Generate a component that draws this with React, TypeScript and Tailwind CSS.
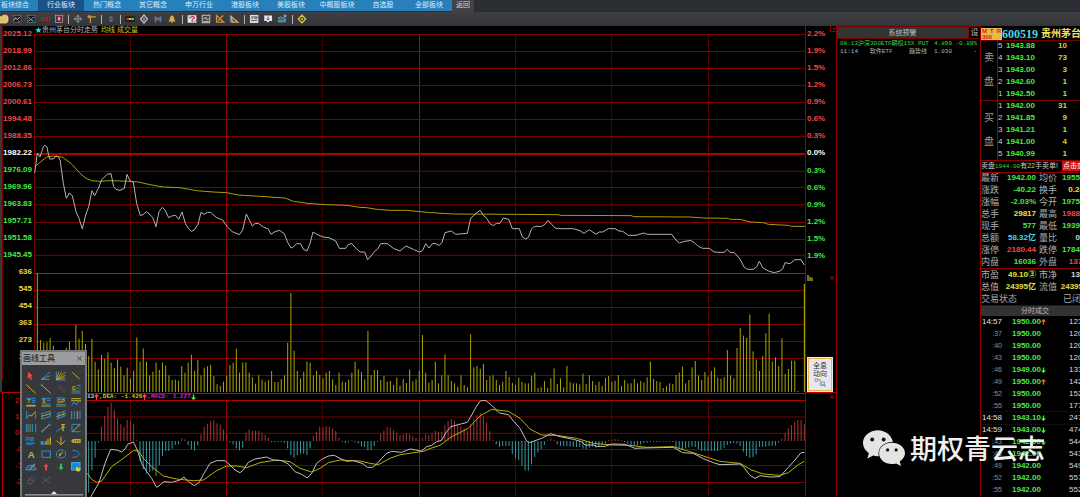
import React from "react";
import { X } from "lucide-react";

const tabs = ["板块综合", "行业板块", "热门概念", "其它概念", "申万行业", "港股板块", "美股板块", "中概股板块", "自选股", "全部板块"];

const Y = "#c4aa28";
const B = "#2f8ccc";

/* ---------- top toolbar ---------- */

const toolGroups: { name: string; icon: React.ReactNode }[][] = [
  [
    { name: "打开", icon: <path d="M2 9h12l4-5h12l4 6v14l-6 5H2z" fill="#e2c069" stroke="#fff0b8" strokeWidth="2" /> },
    { name: "分时图", icon: <><rect x="6" y="5" width="25" height="22" fill="#1c1d20" stroke="#777" strokeWidth="2" /><path d="M8 20l6-7 5 5 9-9" stroke="#c9c9c9" strokeWidth="3" fill="none" /><path d="M10 11h6M20 23h7" stroke="#d44" strokeWidth="3" /></> },
    { name: "K线图", icon: <><rect x="6" y="5" width="25" height="22" fill="#15181c" stroke="#777" strokeWidth="2" /><path d="M9 10l9 8 9-9M9 23l8-5 9 5" stroke="#7fb6d8" strokeWidth="3" fill="none" /></> },
    { name: "RSI", icon: <text x="3" y="22" fontSize="18" fontWeight="700" fill="#d01818" fontFamily="Liberation Sans">RSI</text> },
    { name: "信息", icon: <><rect x="7" y="4" width="23" height="23" fill="#2b3b63" stroke="#b9b9b9" strokeWidth="2" /><rect x="12" y="8" width="13" height="14" fill="#c32222" /><path d="M18 10v10" stroke="#fff" strokeWidth="4" /></> },
  ],
  [
    { name: "移动", icon: <path d="M18 4v23M6 15.500h24M14 9l4-5 4 5M14 22l4 5 4-5M11 11l-5 5 5 5M25 11l5 5-5 5" stroke="#9d9fa2" strokeWidth="3" fill="none" /> },
    { name: "画线", icon: <path d="M6 9h24M13 4v24M9 5l-4 4 4 4" stroke="#c59a4a" strokeWidth="4" fill="none" /> },
  ],
  [{ name: "上下", icon: <path d="M18 6l6 7H12zM18 26l6-7H12zM18 9v14" stroke="#646669" fill="#646669" strokeWidth="3" /> }],
  [
    { name: "红绿灯", icon: <><rect x="4" y="8" width="29" height="16" fill="#0c0c0c" /><rect x="7" y="12" width="8" height="8" fill="#e33" /><rect x="15" y="13" width="7" height="6" fill="#dd3" /><rect x="22" y="12" width="9" height="8" fill="#3d3" /></> },
    { name: "叠加", icon: <path d="M18 3l11 13-11 13L7 16zM18 11v10" stroke="#c2c4c6" strokeWidth="4" fill="none" /> },
    { name: "查找", icon: <path d="M10 7v19M26 7v19M6 16h24M15 11v9M21 11v9" stroke="#66718a" strokeWidth="5" /> },
    { name: "预警", icon: <path d="M18 4c-7 3-7 10-8 15l-4 5h24l-4-5c-1-5-1-12-8-15zM15 25h6v3h-6z" fill="#dfaa43" /> },
  ],
  [
    { name: "帮助", icon: <><rect x="4" y="4" width="28" height="24" fill="#e8e8ec" /><path d="M6 8l8 8M24 24l6-4" stroke="#336" strokeWidth="2" /><text x="10" y="27" fontSize="31" fontWeight="700" fill="#e01010" fontFamily="Liberation Sans">?</text></> },
    { name: "指标", icon: <><rect x="6" y="4" width="24" height="24" fill="#444" stroke="#c8c8c8" strokeWidth="3" /><path d="M9 15h6l3-5 4 9 5-4M10 24h17" stroke="#d8d8d8" strokeWidth="2.500" fill="none" /></> },
    { name: "三角一", icon: <path d="M7 5v21h23zM28 5L12 21" stroke="#d8913c" strokeWidth="4" fill="none" /> },
    { name: "三角二", icon: <><path d="M6 5v21h10z" stroke="#58a0c8" strokeWidth="3" fill="none" /><path d="M9 8l21 18H12z" stroke="#e8a85c" strokeWidth="4" fill="none" /></> },
  ],
  [
    { name: "报表", icon: <><rect x="5" y="3" width="27" height="26" fill="#dcdcdc" /><path d="M9 9h9M9 14h6M20 9h8v5h-8zM9 21h19" stroke="#555" strokeWidth="3" fill="none" /></> },
    { name: "下载", icon: <><path d="M6 5h25v17H22l-4 6-4-6H6z" fill="#e6e6ee" /><path d="M18 8v11M14 15l4 4 4-4" stroke="#424b8c" strokeWidth="3" fill="none" /></> },
    { name: "走势", icon: <><path d="M5 27V19l7-3 7 3 6-6 6 1v13z" fill="#4c89a8" /><path d="M5 15l8-5 6 4 10-9M23 4h7v7" stroke="#9cc5d8" strokeWidth="3" /></> },
  ],
  [{ name: "设置", icon: <path d="M18 4l12 12-12 12L6 16zM18 12v8M14 16h8" fill="#24240c" stroke="#d6cc4a" strokeWidth="4" /> }],
];

/* ---------- drawing palette ---------- */

const glyph = (t: string, x = 9) => (
  <text x={x} y="17" fontSize="16" fontWeight="700" fill={Y} fontFamily="Liberation Sans">{t}</text>
);

const drawTools: { name: string; icon: React.ReactNode }[] = [
  { name: "选择", icon: <path d="M9 2l15 14-7 1 5 8-5 2-4-8-5 4z" fill="#ef5350" stroke="#b71c1c" /> },
  { name: "扇形线", icon: <><path d="M4 25L30 3M4 25l27-11" stroke={B} strokeWidth="3" /><path d="M4 25h24" stroke={Y} strokeWidth="2" /></> },
  { name: "江恩角度", icon: <><path d="M4 2v25h28" stroke={B} strokeWidth="3" fill="none" /><path d="M5 26L11 2M5 26L21 2M5 26L31 4M5 26l26-13M5 26l26-6" stroke={Y} strokeWidth="2.500" /></> },
  { name: "线段", icon: <path d="M7 4l22 20" stroke={Y} strokeWidth="3" /> },
  { name: "直线", icon: <path d="M4 2l28 26" stroke={Y} strokeWidth="3" /> },
  { name: "射线", icon: <path d="M4 2l28 26M4 2l4 4" stroke={Y} strokeWidth="3" /> },
  { name: "平行线", icon: <path d="M4 4l24 22M12 3l20 18" stroke="#55564f" strokeWidth="2.500" /> },
  { name: "黄金线", icon: <><path d="M20 4h12M20 12h12M4 27h28" stroke={B} strokeWidth="3" /><path d="M4 21h28" stroke={Y} strokeWidth="2" />{glyph("G", 5)}</> },
  { name: "百分比线", icon: <><path d="M4 4h28M20 10h12M20 16h12" stroke={B} strokeWidth="3" /><path d="M4 26h28" stroke={Y} strokeWidth="5" />{glyph("T", 7)}</> },
  { name: "波段线", icon: <><path d="M4 4h28M20 10h12M4 21h28" stroke={B} strokeWidth="3" /><path d="M4 27h28" stroke={Y} strokeWidth="3" />{glyph("$", 7)}</> },
  { name: "目标线", icon: <><path d="M4 3h28M4 22h28" stroke={B} strokeWidth="3" /><path d="M4 27h28" stroke={Y} strokeWidth="2" />{glyph("GP", 6)}</> },
  { name: "线性回归", icon: <><path d="M3 5h30M3 11h30" stroke={Y} strokeWidth="3" /><path d="M5 26l7-11 7 9 8-13 5 4" stroke={B} strokeWidth="3" fill="none" /></> },
  { name: "回归带", icon: <><path d="M5 3v24M31 3v24" stroke={B} strokeWidth="3" /><path d="M7 21l7-6 6 3 9-11" stroke={Y} strokeWidth="3" fill="none" /></> },
  { name: "回归通道", icon: <><path d="M5 10v17M31 3v19M5 12L31 3M5 27l26-7" stroke={B} strokeWidth="3" /><path d="M5 19l26-8" stroke={Y} strokeWidth="3" /></> },
  { name: "延长通道", icon: <><path d="M4 13L32 2M4 27l28-10M11 7v19M26 3v17" stroke={B} strokeWidth="3" /><path d="M4 20l28-10" stroke={Y} strokeWidth="3" /></> },
  { name: "周期线", icon: <><path d="M5 3v24M13 3v24M30 3v24" stroke={B} strokeWidth="3" /><path d="M22 3v24" stroke={Y} strokeWidth="3" /></> },
  { name: "费氏周期", icon: <><path d="M4 3v24M9 3v24M22 3v24M32 3v24" stroke={B} strokeWidth="3" /><path d="M15 3v24" stroke={Y} strokeWidth="2" /></> },
  { name: "趋势线", icon: <><path d="M6 25L29 5" stroke={Y} strokeWidth="3" /><path d="M4 22h6v6H4zM26 2h6v6h-6z" fill={B} /></> },
  { name: "阻速线", icon: <><path d="M4 26l10-8h6l8 8" stroke={B} strokeWidth="3" fill="none" /><path d="M24 3v20M19 5h11M19 13h10" stroke={Y} strokeWidth="4" /></> },
  { name: "对称线", icon: <><path d="M31 4H6v22h26" stroke={B} strokeWidth="3" fill="none" /><path d="M30 5L8 25" stroke={Y} strokeWidth="3" /></> },
  { name: "斐波那契", icon: <><text x="3" y="14" fontSize="15" fontWeight="700" fill={B} fontFamily="Liberation Sans">FIB</text><text x="3" y="27" fontSize="12" fontWeight="700" fill={B} fontFamily="Liberation Sans">MAP</text></> },
  { name: "统计", icon: <><path d="M4 26V17h4v9M12 26V19" stroke={B} strokeWidth="4" /><path d="M18 26V14M24 26V9M31 26V4" stroke={Y} strokeWidth="4" /></> },
  { name: "箭头", icon: <path d="M18 2v24M5 14l13 12 13-12" stroke={Y} strokeWidth="3" fill="none" /> },
  { name: "价格标签", icon: <><path d="M3 15l6-6h23v12H9z" fill={Y} /><path d="M12 15h17" stroke="#3b3b2a" strokeWidth="3" strokeDasharray="4 2" /></> },
  { name: "文字", icon: <text x="8" y="26" fontSize="29" fontWeight="700" fill="#9cc060" fontFamily="Liberation Sans">A</text> },
  { name: "矩形", icon: <rect x="6" y="6" width="25" height="19" stroke={B} strokeWidth="3" fill="none" /> },
  { name: "圆形", icon: <><ellipse cx="18" cy="15" rx="14" ry="12" stroke={B} strokeWidth="3" fill="none" /><path d="M15 17l9-8" stroke={Y} strokeWidth="3" /><circle cx="15" cy="17" r="3.500" fill={Y} /></> },
  { name: "圆弧", icon: <path d="M7 4c26 1 27 20 0 21" stroke={B} strokeWidth="3" fill="none" /> },
  { name: "抛物线", icon: <><path d="M4 23c4-17 23-17 28 0zM13 24L30 6" stroke={B} strokeWidth="4" fill="none" /><path d="M14 19l16-13" stroke={Y} strokeWidth="2" /></> },
  { name: "上涨标记", icon: <path d="M18 5l8 9h-5v11h-6V14h-5z" fill="#ef4444" /> },
  { name: "下跌标记", icon: <path d="M18 25l8-9h-5V5h-6v11h-5z" fill="#22c55e" /> },
  { name: "画线管理", icon: <><rect x="5" y="2" width="25" height="22" fill="#1389d8" stroke="#41b4f4" strokeWidth="3" /><path d="M18 14l14 6-5 9-9-3z" fill="#ecc94b" /></> },
  { name: "橡皮", icon: <path d="M7 19L18 6l12 6-9 14H11zM13 12l12 7" stroke="#58595c" strokeWidth="3" fill="none" /> },
  { name: "删除", icon: <path d="M5 5l26 21M31 5L5 26" stroke="#58595c" strokeWidth="3" /> },
];

/* ---------- chart data ---------- */

const axis = [
  "2025.12", "2018.99", "2012.86", "2006.73", "2000.61", "1994.48", "1988.35", "1982.22", "1976.09", "1969.96",
  "1963.83", "1957.71", "1951.58", "1945.45", "636", "545", "454", "363", "273", "182", "91",
];
const pct = ["2.2%", "1.9%", "1.5%", "1.2%", "0.9%", "0.6%", "0.3%", "0.0%", "0.3%", "0.6%", "0.9%", "1.2%", "1.5%", "1.9%"];
const macdAxis = ["2.49", "1.66", "0.83", "-0.00", "-1.00", "-2.00"];

const verticals: [number, string][] = [
  [103, "#800000"], [391.5, "#580000"], [680, "#a80000"], [968, "#480000"], [1258.5, "#c80000"],
  [1546.5, "#580000"], [1835, "#580000"], [2125.5, "#580000"],
];

const volumes = [
  357, 156, 148, 149, 162, 139, 110, 100, 95, 132, 151, 120, 201, 160, 183, 144, 108, 159, 91, 68, 111, 100, 119, 88, 72, 98, 76, 50, 73, 41, 64,
  164, 91, 131, 91, 50, 61, 88, 66, 88, 79, 50, 36, 37, 34, 78, 58, 88, 112, 63, 96, 50, 73, 77, 81, 48, 23, 18, 31, 49, 81, 88, 130, 58, 89, 89, 58,
  44, 25, 50, 37, 31, 36, 63, 30, 30, 39, 50, 148, 297, 124, 63, 41, 61, 91, 88, 50, 63, 51, 41, 58, 63, 38, 21, 58, 31, 29, 37, 58, 91, 68,
  60, 38, 183, 51, 66, 66, 36, 48, 31, 33, 21, 43, 19, 39, 27, 67, 32, 38, 63, 171, 58, 28, 36, 91, 26, 50, 113, 50, 33, 26, 16, 50, 21, 14, 173, 74,
  78, 70, 84, 36, 48, 50, 36, 21, 31, 63, 45, 28, 21, 43, 30, 26, 26, 48, 58, 12, 14, 33, 12, 41, 71, 24, 41, 14, 78, 30, 26, 26, 23, 55, 24, 51, 33,
  21, 31, 18, 42, 48, 31, 34, 51, 18, 36, 26, 26, 39, 26, 33, 28, 44, 91, 39, 33, 30, 12, 18, 26, 24, 51, 58, 76, 26, 36, 74, 93, 50, 36, 60, 46, 63,
  74, 43, 40, 45, 126, 50, 41, 132, 192, 169, 162, 232, 122, 98, 63, 108, 176, 235, 92, 104, 78, 161, 54, 69, 94, 94, 3,
];

const macd = [
  -155, -88, -50, -5, 44, 75, 103, 115, 93, 67, 50, 42, 63, 60, 52, 4, -60, -85, -97, -93, -90, -105, -72, -45, -30, -30, -23, -12, -10, 8, 5, -12, -25,
  -28, -14, 20, 42, 52, 60, 62, 53, 50, 35, 20, -4, -10, -22, -28, -20, 25, 35, 30, 30, 30, 25, 18, 10, -3, -4, -3, -3, -5, -22, -42, -50, -42, -38,
  -38, -42, -22, 15, 28, 43, 42, 45, 42, 38, 30, 10, -3, -6, -4, 4, -4, -8, -15, -18, -28, -27, -15, -3, 22, 32, 42, 40, 32, 25, 18, 20, 24, 20, 14,
  10, 6, 8, 20, 18, 24, 30, 28, 28, 48, 60, 66, 60, 52, 45, 38, 30, 50, 68, 78, 84, 74, 56, 30, 4, -10, -18, -15, -15, -15, -40, -52, -57, -75, -89,
  -89, -70, -48, -34, -24, -12, 4, 8, 4, -10, -15, -15, -16, -17, -18, -18, -18, -23, -24, -20, -16, -20, -18, -12, -7, 3, 4, 6, 5, 3, -3, -8, -12,
  -14, -13, -11, -6, -5, -3, -3, -3, -3, -2, -2, -2, -3, -20, -24, -25, -22, -20, -16, -18, -24, -30, -30, -30, -30, -30, -30, -25, -20, -12, -8, -6,
  -8, -15, -32, -45, -50, -48, -40, -18, -17, -17, -15, -14, -14, -5, 6, 25, 38, 48, 58, 63, 63, 50,
];

const volStep = (2394 - 112) / (volumes.length - 1);
const macdStep = (2413 - 266) / (macd.length - 1);

function Line({ points, color }: { points: string; color: string }) {
  return <polyline points={points} fill="none" stroke={color} strokeWidth="1" vectorEffect="non-scaling-stroke" />;
}

function Grid({ rows, top, bottom }: { rows: [number, string][]; top: number; bottom: number }) {
  return (
    <>
      {verticals.map(([x, c]) => (
        <line key={x} x1={x} x2={x} y1={top} y2={bottom} stroke={c} vectorEffect="non-scaling-stroke" />
      ))}
      {rows.map(([y, c]) => (
        <line key={y} x1={102} x2={2415} y1={y} y2={y} stroke={c} vectorEffect="non-scaling-stroke" />
      ))}
    </>
  );
}

const priceRows: [number, string][] = [103.5, 154.5, 205.5, 256.5, 307.5, 358.5, 409.5, 514, 562.5, 614, 667.5, 718.5, 766].map((y) => [y, "#7c0000"]);
const volRows: [number, string][] = [871.5, 922.5, 973.5, 1024.5, 1075.5, 1126.5].map((y) => [y, "#7c0000"]);
const macdRows: [number, string][] = [1251, 1300, 1348.5, 1396.5, 1447.5].map((y) => [y, "#7c0000"]);

function PriceChart() {
  return (
    <svg className="block h-[239px] w-full" viewBox="102 102 2313 717" preserveAspectRatio="none" aria-label="分时走势">
      <Grid rows={priceRows} top={102} bottom={819} />
      <line x1="102" x2="2415" y1="462" y2="462" stroke="#b00000" strokeWidth="2" vectorEffect="non-scaling-stroke" />
      <Line color="#a8a000" points="105,500 120,487 140,471 160,468 188,472 210,488 218,495 240,520 258,535 275,542 300,544 330,542 390,544 415,546 450,554 490,561 540,563 590,572 640,576 680,578 715,585 780,589 855,594 880,604 930,611 980,614 1040,616 1080,622 1100,623 1130,628 1170,631 1220,631 1260,635 1295,638 1360,642 1550,643 1675,644 1680,646 1895,647 1900,650 2070,651 2110,654 2185,655 2190,658 2220,658 2250,666 2290,668 2305,673 2365,676 2375,679 2415,679" />
      <Line color="#b4b4b4" points="104,519 108,490 112,459 120,471 126,453 130,440 135,436 141,441 145,462 149,477 160,477 168,467 175,471 181,482 183,500 190,550 199,595 208,579 217,587 228,635 237,655 247,687 257,645 266,620 276,572 284,587 295,565 305,539 322,523 333,521 341,560 348,568 360,571 373,565 381,523 390,543 400,547 410,610 421,647 430,643 440,635 458,652 468,680 477,635 487,622 495,630 506,653 515,648 527,646 536,658 546,636 556,670 565,685 574,694 583,690 594,673 603,637 613,643 622,637 632,637 650,653 668,660 682,681 697,695 718,704 728,690 739,642 748,660 757,678 765,671 775,670 790,681 805,687 813,703 825,695 838,691 853,701 863,727 873,744 880,741 890,731 902,731 910,748 921,753 930,730 939,696 950,703 970,711 987,713 1007,723 1018,745 1037,745 1045,734 1055,730 1066,743 1080,756" />
      <g transform="translate(1080 495)">
        <Line color="#b4b4b4" points="0,261 14,261 23,284 33,273 43,260 53,252 62,236 82,236 100,250 120,258 138,243 160,253 178,261 188,256 197,236 207,249 217,236 228,236 237,242 246,232 255,203 274,198 287,208 322,205 332,160 345,148 360,136 372,153 380,160 390,176 400,182 409,175 420,175 430,159 446,163 457,191 478,191 487,216 497,222 505,217 515,191 524,184 545,184 555,178 564,166 575,178 585,189 595,191 640,191 660,197 672,205 688,194 708,208 718,201 728,201 745,191 765,191 777,198 788,199 805,211 828,211 838,208 851,204 862,208 935,208 948,225 958,234 970,230 992,226 1003,233 1015,244 1028,250 1048,250 1062,261 1080,262 1092,262 1102,253 1110,262 1123,263 1140,282 1152,306 1162,313 1180,313 1190,305 1198,289 1208,308 1225,318 1243,323 1260,318 1268,312 1275,293 1290,296 1305,284 1323,284 1333,300" />
      </g>
    </svg>
  );
}

function VolumeChart() {
  return (
    <svg className="block h-[120px] w-full" viewBox="102 819 2313 360" preserveAspectRatio="none" aria-label="成交量">
      <Grid rows={volRows} top={819} bottom={1179} />
      <line x1="102" x2="2415" y1="820.5" y2="820.5" stroke="#e00000" vectorEffect="non-scaling-stroke" />
      {volumes.map((v, i) => (
        <line key={i} x1={112 + i * volStep} x2={112 + i * volStep} y1={1176 - v} y2={1176} stroke="#aaa600" vectorEffect="non-scaling-stroke" />
      ))}
      <line x1="2413" x2="2413" y1="852" y2="1176" stroke="#c0b800" vectorEffect="non-scaling-stroke" />
    </svg>
  );
}

function MacdChart() {
  return (
    <svg className="block h-[97px] w-full" viewBox="102 1200 2313 291" preserveAspectRatio="none" aria-label="MACD">
      <Grid rows={macdRows} top={1200} bottom={1491} />
      <line x1="102" x2="2415" y1="1201.5" y2="1201.5" stroke="#b00000" vectorEffect="non-scaling-stroke" />
      {macd.map((v, i) => (
        <line key={i} x1={266 + i * macdStep} x2={266 + i * macdStep} y1={1323} y2={1323 - v} stroke={v > 0 ? "#a83434" : "#349ca4"} vectorEffect="non-scaling-stroke" />
      ))}
      <g transform="translate(0 990)">
        <Line color="#b8b000" points="262,430 275,448 290,457 305,453 335,410 370,385 400,362 415,362 430,385 455,410 490,438 530,447 580,452 610,450 650,422 680,408 710,408 740,413 780,398 830,390 870,395 900,415 935,426 960,415 985,398 1020,390 1080,393 1110,400 1135,404 1170,385 1200,374 1270,364 1295,354 1320,346 1355,320 1405,295 1440,258 1475,238 1525,244 1560,265 1590,297 1625,315 1670,316 1730,325 1780,340 1835,345 1890,346 1940,352 2020,350 2060,362 2160,394 2220,400 2255,420 2290,432 2340,436 2365,428 2395,404 2413,394" />
        <Line color="#c0c0c0" points="272,501 297,458 315,400 332,358 350,360 365,366 375,357 383,343 400,336 412,360 425,400 440,425 455,445 470,472 480,465 492,455 515,457 540,450 552,441 565,455 583,467 597,458 612,430 630,400 650,392 675,392 690,405 705,420 720,428 730,420 745,397 765,387 800,381 820,390 845,392 865,402 885,425 905,433 922,444 935,430 950,400 965,388 985,378 1003,376 1020,385 1040,394 1060,392 1080,398 1090,402 1102,412 1118,412 1130,402 1145,385 1160,370 1175,364 1205,367 1230,357 1265,363 1280,350 1295,346 1310,335 1325,331 1338,308 1352,290 1375,284 1402,277 1415,255 1430,228 1442,212 1458,212 1475,226 1498,249 1525,254 1542,275 1560,295 1580,333 1588,338 1605,332 1625,325 1652,311 1680,320 1720,328 1745,335 1755,345 1780,345 1790,349 1815,349 1835,342 1875,343 1905,355 1930,354 2020,352 2048,368 2080,370 2110,386 2140,398 2160,404 2220,402 2230,410 2250,436 2265,445 2280,437 2310,441 2340,440 2365,412 2385,390 2403,368 2413,367" />
      </g>
    </svg>
  );
}

/* ---------- quote data ---------- */

const sells = [["5", "1943.88", "10"], ["4", "1943.10", "73"], ["3", "1943.00", "3"], ["2", "1942.60", "1"], ["1", "1942.50", "1"]];
const buys = [["1", "1942.00", "31"], ["2", "1941.85", "9"], ["3", "1941.21", "1"], ["4", "1941.00", "4"], ["5", "1940.99", "1"]];

const G = "text-[#46e846]";
const R = "text-[#f04848]";
const W = "text-[#d8d8d8]";
const YL = "text-[#e8e040]";

const stats = [
  ["最新", "1942.00", G, "均价", "1955.99", G],
  ["涨跌", "-40.22", G, "换手", "0.24%", YL],
  ["涨幅", "-2.03%", G, "今开", "1975.00", G],
  ["总手", "29817", YL, "最高", "1988.88", R],
  ["现手", "577", G, "最低", "1939.80", G],
  ["总额", "58.32亿", "text-[#40d8e8]", "量比", "0.93", W],
  ["涨停", "2180.44", R, "跌停", "1784.00", G],
  ["内盘", "16036", G, "外盘", "13781", R],
];
const values = [
  ["市盈", "49.10③", YL, "市净", "13.80", W],
  ["总值", "24395亿", YL, "流值", "24395亿", YL],
];

const ticks = [
  ["14:57", "1950.00", "up", "123"], [":37", "1950.00", "", "120"], [":40", "1950.00", "", "120"], [":43", "1950.00", "", "120"],
  [":46", "1949.00", "down", "133"], [":49", "1950.00", "up", "142"], [":52", "1950.00", "", "152"], [":55", "1950.00", "", "177"],
  ["14:58", "1943.10", "down", "247"], ["14:59", "1943.00", "down", "474"], [":43", "1942.00", "down", "544"], [":46", "1942.00", "", "543"],
  [":49", "1942.00", "", "549"], [":52", "1942.00", "", "557"], [":55", "1942.00", "", "552"],
];

function Arrow({ up }: { up: boolean }) {
  return (
    <svg viewBox="0 0 12 16" className={up ? "h-[6px] w-[5px] text-[#ff5050]" : "h-[6px] w-[5px] rotate-180 text-[#46e846]"} aria-hidden="true">
      <path d="M6 1v14M1 7l5-5 5 5" stroke="currentColor" strokeWidth="3.500" fill="none" />
    </svg>
  );
}

function OrderSide({ chars, rows }: { chars: string; rows: string[][] }) {
  return (
    <section className="flex h-[60px] shadow-[inset_0_1px_#700000]">
      <div className="flex w-[17px] flex-col items-center justify-around border-r border-[#900000] py-1.5 text-[10px] leading-3 text-[#989898]">
        {chars.split("").map((c) => <span key={c}>{c}</span>)}
      </div>
      <table className="w-[69px] table-fixed border-collapse text-[8px] leading-3">
        <tbody>
          {rows.map(([n, p, q]) => (
            <tr key={n} className="h-3">
              <td className="w-[8px] p-0 text-[#d0d0d0]">{n}</td>
              <td className="w-[30px] p-0 font-bold text-[#46e846]">{p}</td>
              <td className="p-0 text-right font-bold text-[#d8d030]">{q}</td>
            </tr>
          ))}
        </tbody>
      </table>
    </section>
  );
}

function StatRow({ row }: { row: string[] }) {
  return (
    <div className="flex h-3 items-center whitespace-nowrap text-[8px] leading-3">
      <span className="w-[18px] text-[9px] text-[#b0b0b0]">{row[0]}</span>
      <span className={`w-[37px] text-right font-bold ${row[2]}`}>{row[1]}</span>
      <span className="ml-[3px] w-[18px] text-[9px] text-[#b0b0b0]">{row[3]}</span>
      <span className={`w-[34px] text-right font-bold ${row[5]}`}>{row[4]}</span>
    </div>
  );
}

function QuotePanel() {
  return (
    <aside className="w-[100px] shrink-0 overflow-hidden border-l border-[#900000]">
      <div className="w-[120px]">
        <header className="flex h-[14px] items-center whitespace-nowrap pt-px">
          <div className="flex h-[12px] w-[21px] flex-col justify-center bg-[#e8b848] px-px text-[6px] font-bold leading-[6px] text-[#e02010]">
            <span className="flex justify-between"><b>M</b><b>T</b><b>R</b></span>
            <span>300</span>
          </div>
          <h1 className="flex items-center gap-[3px]">
            <span className="font-['Liberation_Serif',serif] text-[12px] font-bold leading-3 text-[#48d8e8]">600519</span>
            <span className="text-[10px] font-bold leading-3 text-[#f0e060]">贵州茅台</span>
          </h1>
        </header>
        <OrderSide chars="卖盘" rows={sells} />
        <OrderSide chars="买盘" rows={buys} />
        <div className="flex h-3 items-center gap-[6px] whitespace-nowrap text-[7px] leading-3 text-[#c8c8c8] shadow-[inset_0_1px_#900000]">
          <p className="w-[75px]">卖盘<span className="font-['Liberation_Mono',monospace] text-[6px] text-[#38d038]">1944.00</span>有<span className="text-[#d8d030]">22</span>手卖单!</p>
          <button className="bg-[#d01010] px-px leading-[10px] text-white">点击查看</button>
        </div>
        <div className="shadow-[inset_0_1px_#900000]">
          {stats.map((r) => <StatRow key={r[0]} row={r} />)}
        </div>
        <div className="border-t border-[#900000]">
          {values.map((r) => <StatRow key={r[0]} row={r} />)}
          <div className="flex h-3 items-center text-[9px] leading-3 text-[#a8a8a8]">
            <span className="w-[82px]">交易状态</span>
            <span>已闭市</span>
          </div>
        </div>
        <h2 className="h-[11px] bg-[#333] pl-[40px] text-[7px] leading-[11px] text-[#b8b8b8] shadow-[inset_0_1px_#600000]">分时成交</h2>
        <table className="w-full table-fixed border-collapse text-[8px] leading-3">
          <tbody>
            {ticks.map(([t, p, dir, v], i) => (
              <tr key={i} className={t === "14:58" ? "h-3 outline-1 outline-dotted outline-[#600000]" : "h-3"}>
                <td className={t.length > 3 ? "w-[21px] p-0 text-right text-[#e0e0e0]" : "w-[21px] p-0 text-right text-[7px] text-[#909090]"}>{t}</td>
                <td className="w-[67px] p-0 pl-[10px] font-bold text-[#46e846]">
                  <span className="flex items-center">{p}{dir && <Arrow up={dir === "up"} />}</span>
                </td>
                <td className="p-0 text-[#d8d8d8]">{v}</td>
              </tr>
            ))}
          </tbody>
        </table>
      </div>
    </aside>
  );
}

function AlertPanel() {
  return (
    <section className="w-[144px] shrink-0 border-l border-[#900000]">
      <header className="flex h-[13px] border-y border-[#700000] text-[7px] leading-[11px] text-[#c0c0c0]">
        <h2 className="flex-1 bg-[#333] text-center">系统预警</h2>
        <button className="w-3 border-l border-[#900000] text-[8px]">设</button>
      </header>
      <table className="ml-[3px] w-[137px] table-fixed border-collapse whitespace-nowrap font-['Liberation_Mono','Noto_Sans_CJK_SC',monospace] text-[6px] leading-[8px]">
        <tbody>
          <tr className="h-[9px] text-[#38d838]">
            <td className="w-[18px] p-0">08:13</td>
            <td className="w-[69px] p-0" colSpan={2}>沪深300ETF期权15X PUT</td>
            <td className="w-[25px] p-0 text-right">4.899</td>
            <td className="w-[25px] p-0 text-right">-0.89%</td>
          </tr>
          <tr className="h-[8px] text-[#b4b4b4]">
            <td className="p-0">11:14</td>
            <td className="w-[35px] p-0 text-right">软件ETF</td>
            <td className="w-[34px] p-0 text-right">趋势线</td>
            <td className="p-0 text-right">1.030</td>
            <td className="p-0 text-right">-</td>
          </tr>
        </tbody>
      </table>
    </section>
  );
}

function DrawPalette() {
  return (
    <section className="absolute left-[20px] top-[324px] w-[67px] border-2 border-b-0 border-[#77787a] bg-[#37383c]">
      <header className="flex h-[13px] items-center justify-between bg-[#9b9c9e] pl-px pr-[2px]">
        <h2 className="text-[8px] font-medium leading-[13px] text-[#2c2c2c]">画线工具</h2>
        <button aria-label="关闭"><X className="size-[7px] text-[#333]" strokeWidth={3} /></button>
      </header>
      <div className="grid grid-cols-4 px-[2px] pt-[4px]">
        {drawTools.map((t) => (
          <button key={t.name} aria-label={t.name} className="flex h-[13px] items-center justify-center">
            <svg viewBox="0 0 36 30" className="h-[10px] w-[12px]" fill="none" aria-hidden="true">{t.icon}</svg>
          </button>
        ))}
      </div>
      <svg viewBox="0 0 60 12" className="mx-auto block h-[12px] w-[58px]" aria-hidden="true">
        <path d="M0 9h60" stroke="#c8c8c8" strokeWidth="1" />
        <path d="M27 8l3-3 3 3z" fill="#e8e8e8" />
      </svg>
    </section>
  );
}

function labelColor(i: number) {
  if (i > 13) return "text-[#e0d848]";
  if (i === 7) return "text-white";
  return i < 7 ? "text-[#f04848]" : "text-[#46e846]";
}

export default function App() {
  return (
    <div className="flex min-h-screen flex-col overflow-hidden bg-black font-['Liberation_Sans','Noto_Sans_CJK_SC',sans-serif]">
      <nav className="flex h-[12px] bg-[#2b2e32] text-[7px] leading-[9px]">
        <div className="-ml-2 flex h-[11px] bg-[#2880bb] text-[#d8ecf8]">
          {tabs.map((t, i) => (
            <a key={t} href="#" className={i === 1 ? "w-[46px] bg-[#1d5288] text-center" : "w-[46px] text-center"}>{t}</a>
          ))}
        </div>
        <a href="#" className="w-[22px] bg-[#414347] text-center text-[#d0d0d0]">返回</a>
      </nav>

      <div className="flex h-[14px] items-center overflow-hidden bg-linear-to-b from-[#3f4044] to-[#333437]">
        <div className="-ml-1 flex items-center">
          {toolGroups.map((g, gi) => (
            <React.Fragment key={gi}>
              {gi > 0 && (
                <span className={gi > 3 ? "flex w-[6px] justify-center" : "flex w-[5px] justify-center"}>
                  <span className="h-[9px] w-px bg-[#b0b0b0]" />
                </span>
              )}
              {g.map((t) => (
                <button key={t.name} aria-label={t.name} className="flex w-[14px] justify-center">
                  <svg viewBox="0 0 36 32" className="h-[10px] w-[12px]" fill="none" aria-hidden="true">{t.icon}</svg>
                </button>
              ))}
            </React.Fragment>
          ))}
        </div>
      </div>

      <main className="relative flex flex-1">
        <section className="flex min-w-0 flex-1">
          <div className="flex w-[34px] shrink-0 flex-col">
            <div className="flex h-[366px] flex-col border-l-2 border-[#38383c]">
              <div className="flex h-[354px] flex-col justify-between border-l border-[#700000] pr-[2px] pt-[2px] text-right text-[8px] font-bold leading-3">
                {axis.map((a, i) => <span key={i} className={labelColor(i)}>{a}</span>)}
              </div>
            </div>
            <div className="ml-[2px] flex flex-1 flex-col border-l border-t border-[#c00000] pt-[2px]">
              <div className="flex h-[93px] flex-col justify-between pl-[12px] text-[8px] leading-3 text-[#e02020]">
                {macdAxis.map((a) => <span key={a}>{a}</span>)}
              </div>
            </div>
          </div>

          <div className="min-w-0 flex-1">
            <h2 className="flex h-[8px] items-center gap-[3px] whitespace-nowrap pl-px text-[7px] leading-[8px] text-[#b0b0b0]">
              <span><span className="text-[#30e0e8]">★</span>贵州茅台分时走势</span>
              <span className="text-[#c8c020]">均线 成交量</span>
            </h2>
            <PriceChart />
            <VolumeChart />
            <p className="flex h-[7px] items-center whitespace-pre border-t border-[#d00000] pl-[53px] font-['Liberation_Mono',monospace] text-[6px] font-bold leading-[6px]">
              <span className="text-[#d0d0d0]">13</span>
              <Arrow up />
              <span className="text-[#d0c820]">,DEA: -1.426</span>
              <Arrow up />
              <span className="text-[#d818d8]">,MACD: 1.227</span>
              <Arrow up={false} />
            </p>
            <MacdChart />
          </div>

          <div className="flex w-[31px] shrink-0 flex-col border-l border-[#900000]">
            <div className="flex h-[236px] justify-between">
              <div className="flex flex-col justify-between pl-px pt-[2px] text-[8px] font-bold leading-3">
                {pct.map((p, i) => <span key={i} className={labelColor(i)}>{p}</span>)}
              </div>
              <button aria-label="收起" className="flex size-[6px] items-center justify-center border-b border-l border-[#900000]">
                <span className="size-[2px] bg-[#900000]" />
              </button>
            </div>
            <div className="flex h-[95px] justify-between px-px pt-[13px]">
              <svg viewBox="0 0 18 18" className="size-[6px]" aria-hidden="true">
                <path d="M3 0v18M9 5v13M15 8v10" stroke="#b0aa30" strokeWidth="4" />
              </svg>
              <button aria-label="关闭成交量" className="flex h-[6px]"><X className="size-[6px] text-[#b00000]" strokeWidth={4} /></button>
            </div>
            <button className="ml-px h-[35px] w-[26px] border border-[#e8e8e8] bg-[#e8e8ec] text-[7px] leading-[8px] text-[#333]">
              <span className="flex h-full flex-col items-center justify-center border border-[#eab44c]">
                <span>全息</span>
                <span>动向</span>
                <svg viewBox="0 0 42 30" className="h-[9px] w-[13px]" fill="none" aria-hidden="true">
                  <path d="M3 3h9v8H3zM25 13h9v9h-9zM12 5h8v20h17M34 21l5 4-5 4" stroke="#6189a4" strokeWidth="2.500" />
                </svg>
              </span>
            </button>
            <div className="flex flex-1 items-start justify-end border-t border-[#c00000] pr-px pt-px">
              <button aria-label="关闭指标" className="flex h-[6px]"><X className="size-[6px] text-[#b00000]" strokeWidth={4} /></button>
            </div>
          </div>
        </section>

        <AlertPanel />
        <QuotePanel />
        <DrawPalette />

        <div className="pointer-events-none absolute bottom-[31px] right-[35px] flex items-center gap-[5px] text-[#f0f0f0]">
          <svg viewBox="0 0 128 108" className="h-[36px] w-[42px]" aria-hidden="true">
            <path d="M46 0C20 0 0 17 0 39c0 13 7 23 18 31l-5 16 18-9c6 2 11 3 17 2C43 55 62 35 91 36 87 15 68 0 46 0z" fill="#e4e4e4" />
            <path d="M88 38c-22 0-39 14-39 32s17 33 39 33c5 0 9-1 13-2l15 8-4-14c9-6 16-15 16-25 0-18-18-32-40-32z" fill="#e4e4e4" />
            <g fill="#151515">
              <circle cx="28" cy="28" r="6" /><circle cx="63" cy="28" r="6" />
              <circle cx="75" cy="60" r="5" /><circle cx="101" cy="60" r="5" />
            </g>
          </svg>
          <span className="font-['Noto_Sans_CJK_SC',sans-serif] text-[27px] font-medium leading-[36px]">期权青云志</span>
        </div>
      </main>
    </div>
  );
}
